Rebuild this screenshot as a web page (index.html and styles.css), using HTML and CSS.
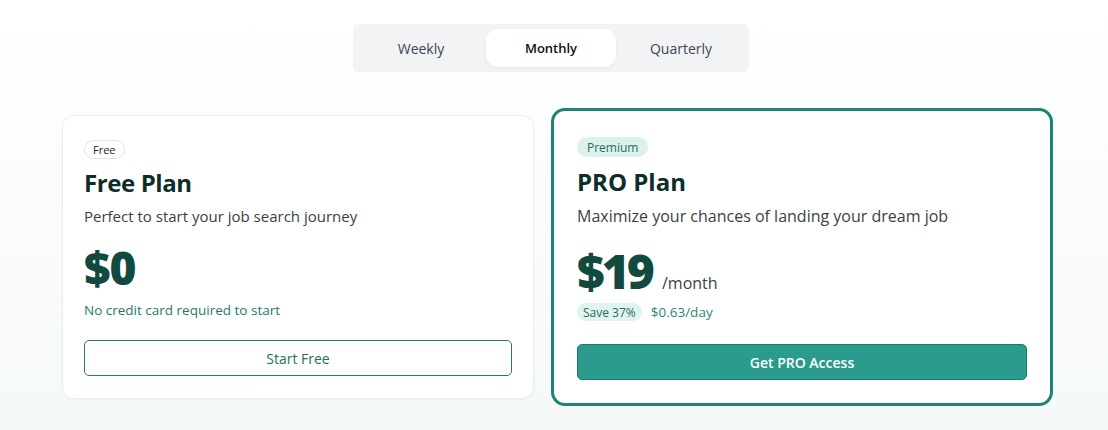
FILE: index.html
```html
<!DOCTYPE html>
<html lang="en">
<head>
<meta charset="utf-8">
<title>Pricing</title>
<link rel="stylesheet" href="styles.css">
</head>
<body>
<main class="page">
  <div class="toggle-wrap">
    <div class="toggle">
      <button class="seg">Weekly</button>
      <button class="seg active">Monthly</button>
      <button class="seg">Quarterly</button>
    </div>
  </div>
  <section class="plans">
    <article class="card free">
      <span class="badge badge-free">Free</span>
      <h2 class="title">Free Plan</h2>
      <p class="desc">Perfect to start your job search journey</p>
      <div class="price-row"><span class="price">$0</span></div>
      <p class="note">No credit card required to start</p>
      <button class="btn btn-outline">Start Free</button>
    </article>
    <article class="card pro">
      <span class="badge badge-pro">Premium</span>
      <h2 class="title">PRO Plan</h2>
      <p class="desc desc-pro">Maximize your chances of landing your dream job</p>
      <div class="price-row"><span class="price price-pro">$19</span><span class="per">/month</span></div>
      <div class="save-row"><span class="save">Save 37%</span><span class="daily">$0.63/day</span></div>
      <button class="btn btn-solid">Get PRO Access</button>
    </article>
  </section>
</main>
</body>
</html>
```

FILE: styles.css
```css
* { box-sizing: border-box; }
html, body { height: 100%; }
body {
  margin: 0;
  font-family: "Open Sans", "Liberation Sans", sans-serif;
  background: linear-gradient(180deg, #ffffff 0%, #f5f9f8 100%);
  color: #1f2937;
}
.page { padding-top: 24px; }
.toggle-wrap { display: flex; justify-content: center; padding-right: 6px; }
.toggle {
  display: flex;
  background: #f2f3f5;
  border-radius: 6px;
  padding: 5px 3px;
}
.seg {
  width: 130px;
  height: 38px;
  border: 0;
  background: transparent;
  font-family: inherit;
  font-size: 14px;
  color: #3b4656;
  border-radius: 12px;
  cursor: pointer;
}
.seg.active {
  background: #ffffff;
  color: #111111;
  font-size: 13px;
  font-weight: 600;
  box-shadow: 0 1px 3px rgba(0,0,0,0.06);
}
.plans {
  display: flex;
  align-items: center;
  gap: 17px;
  padding-left: 62px;
  margin-top: 36px;
}
.card {
  display: flex;
  flex-direction: column;
  align-items: flex-start;
  background: #ffffff;
  border-radius: 12px;
}
.free {
  width: 472px;
  border: 1px solid #eceeed;
  padding: 24px 21px 22px;
  box-shadow: 0 1px 3px rgba(0,0,0,0.03);
}
.pro {
  width: 502px;
  border: 3px solid #1b8473;
  border-radius: 14px;
  padding: 26px 23px 23px;
}
.badge {
  display: inline-flex;
  align-items: center;
  border-radius: 999px;
  font-size: 11px;
}
.badge-free {
  height: 19px;
  padding: 0 8px;
  border: 1px solid #e2e4e3;
  color: #222;
}
.badge-pro {
  height: 20px;
  padding: 0 10px;
  background: #dcf1eb;
  color: #1f6f62;
  font-size: 12px;
}
.title {
  margin: 9px 0 0;
  font-size: 24px;
  line-height: 30px;
  font-weight: 700;
  color: #0d2e28;
}
.free .title { letter-spacing: -0.4px; }
.pro .title { margin-top: 10px; }
.desc {
  margin: 7px 0 0;
  font-size: 15px;
  line-height: 22px;
  color: #3c3f44;
}
.desc-pro {
  font-size: 16px;
  line-height: 24px;
}
.price-row {
  display: flex;
  align-items: baseline;
  gap: 10px;
  margin-top: 17px;
}
.pro .price-row { margin-top: 19px; }
.price {
  font-size: 46px;
  line-height: 46px;
  font-weight: 800;
  color: #124a40;
  letter-spacing: -1px;
}
.price-pro { font-size: 48px; line-height: 48px; letter-spacing: -3px; }
.per { font-size: 16px; color: #3c3f44; }
.note {
  margin: 10px 0 0;
  font-size: 13.5px;
  line-height: 20px;
  color: #1f7a6c;
}
.save-row {
  display: flex;
  align-items: center;
  gap: 9px;
  margin-top: 8px;
}
.save {
  height: 18px;
  display: inline-flex;
  align-items: center;
  padding: 0 6px;
  border-radius: 999px;
  background: #e0f3ee;
  color: #2d6b60;
  font-size: 12px;
}
.daily { font-size: 13.5px; color: #2a8878; }
.btn {
  width: 100%;
  height: 36px;
  border-radius: 5px;
  font-family: inherit;
  font-size: 14px;
  cursor: pointer;
}
.btn-outline {
  margin-top: 20px;
  background: #ffffff;
  border: 1px solid #1f7d6f;
  color: #1f6f62;
}
.btn-solid {
  margin-top: 23px;
  background: #2a9b8c;
  border: 1px solid #1e7c6f;
  color: #ffffff;
  font-weight: 600;
}
```
